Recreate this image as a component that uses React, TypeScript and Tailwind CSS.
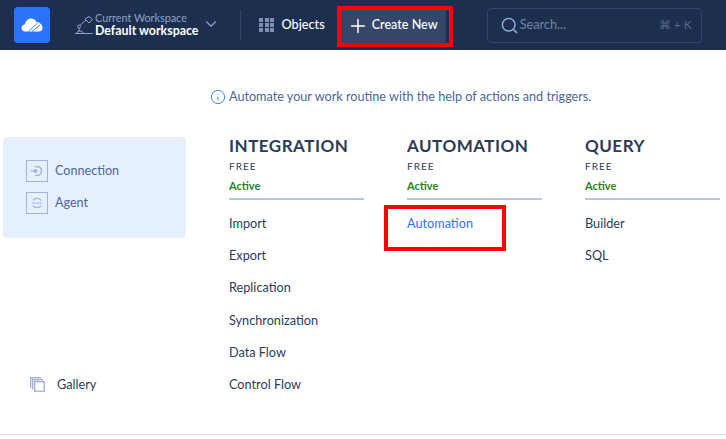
import { ChevronDown, Plus, Search, Info } from 'lucide-react';

const columns = [
  { title: 'INTEGRATION', items: ['Import', 'Export', 'Replication', 'Synchronization', 'Data Flow', 'Control Flow'] },
  { title: 'AUTOMATION', items: ['Automation'] },
  { title: 'QUERY', items: ['Builder', 'SQL'] },
];

const Logo = () => (
  <div className="w-9 h-9 rounded-[4px] bg-[#2a74fb] flex items-center justify-center">
    <svg width="22" height="14" viewBox="0 0 22 14" fill="white">
      <path d="M4 13.5C2 13.5 0.5 12 0.5 10C0.5 8 2 6.5 4 6.3C4.5 3 7 0.5 10 0.5C12.5 0.5 14.5 1.8 15.5 4C18.5 4 21.5 6.5 21.5 10C21.5 12 20 13.5 18 13.5Z" />
      <path d="M7.5 13.5L16.5 5" stroke="#2a74fb" strokeWidth="0.9" />
      <path d="M11 13.5L19 7" stroke="#2a74fb" strokeWidth="0.9" />
    </svg>
  </div>
);

const Lamp = () => (
  <svg width="19" height="23" viewBox="0 0 19 23" fill="none" stroke="#8fa3c7" strokeWidth="1">
    <path d="M0 19.5H18" />
    <path d="M2 19C2 17.5 3.5 17 5 17C6.5 17 8 17.5 8 19" />
    <circle cx="4" cy="12.5" r="1.5" />
    <path d="M5 11.5L11 6M4 14V17" />
    <path d="M10 5L14 2.5L17.5 5.5L14 9Z" />
  </svg>
);

const Grid = () => (
  <div className="grid grid-cols-3 gap-[1px] w-[15px]">
    {[...Array(9)].map((_, i) => (
      <div key={i} className="w-[4px] h-[4px] bg-[#7e91b5]" />
    ))}
  </div>
);

const Header = () => (
  <header className="h-[50px] bg-[#1c2f4f] flex items-center pl-[14px] relative">
    <Logo />
    <div className="ml-[25px] flex items-center">
      <Lamp />
      <div className="ml-[1px] leading-none">
        <div className="text-[10.8px] leading-[12px] text-[#8fa3c7]">Current Workspace</div>
        <div className="text-[12.4px] leading-[14px] font-bold text-white">Default workspace</div>
      </div>
      <ChevronDown className="ml-[4px] mb-[2px] text-[#8fa3c7]" size={18} strokeWidth={1.5} />
    </div>
    <div className="ml-[20px] w-px h-[30px] bg-[#33476b]" />
    <div className="ml-[18px] flex items-center gap-[7px]">
      <Grid />
      <span className="text-[12.7px] font-medium text-white">Objects</span>
    </div>
    <button className="ml-[14px] mt-[1px] w-[107px] h-[34px] bg-[#36466a] rounded-[3px] flex items-center pl-[8px] gap-[3px] text-[12.6px] font-medium text-white">
      <Plus size={22} strokeWidth={1.6} />
      Create New
    </button>
    <div className="ml-[41px] w-[215px] h-[35px] border border-[#33476b] rounded-[4px] flex items-center pl-[12px] pr-[9px]">
      <Search size={19} strokeWidth={1.8} className="text-[#8fb0e0]" />
      <span className="ml-[1px] text-[12.7px] text-[#6f85a9]">Search...</span>
      <span className="ml-auto text-[12px] text-[#56698c]">⌘ + K</span>
    </div>
  </header>
);

const Connection = () => (
  <svg width="22" height="22" viewBox="0 0 22 22" fill="none" stroke="#a3b4dc">
    <rect x="0.5" y="0.5" width="21" height="21" />
    <path d="M9 7A4.5 4.5 0 1 1 9 15" strokeWidth="1.4" />
    <path d="M4.5 11H9" strokeWidth="1.3" />
    <circle cx="9.5" cy="11" r="2" fill="#a3b4dc" stroke="none" />
  </svg>
);

const Agent = () => (
  <svg width="22" height="22" viewBox="0 0 22 22" fill="none" stroke="#a3b4dc">
    <rect x="0.5" y="0.5" width="21" height="21" />
    <path d="M7 8.5A4.2 3 0 0 1 15 8.5M7 13.5A4.2 3 0 0 0 15 13.5" strokeWidth="1.4" />
    <path d="M5.5 11H16.5" strokeWidth="1" />
  </svg>
);

const Gallery = () => (
  <svg width="15" height="15" viewBox="0 0 15 15" fill="none" stroke="#a3b4dc" strokeWidth="1.4">
    <path d="M0.7 11V0.7H11" />
    <path d="M2.7 12.5V2.7H13" />
    <rect x="4.7" y="4.7" width="9.5" height="9.5" />
  </svg>
);

const Sidebar = () => (
  <aside className="w-[186px] pl-[3px] flex flex-col shrink-0">
    <div className="mt-[87px] h-[101px] bg-[#e6f0fd] rounded-[4px] pl-[23px] pt-[23px] flex flex-col gap-[10px]">
      <div className="flex items-center gap-[7px] text-[12.6px] text-[#4a6799]">
        <Connection />
        Connection
      </div>
      <div className="flex items-center gap-[7px] text-[12.6px] text-[#4a6799]">
        <Agent />
        Agent
      </div>
    </div>
    <div className="mt-[137px] pl-[27px] flex items-center gap-[12px] text-[12.7px] text-[#2d3c58]">
      <Gallery />
      Gallery
    </div>
  </aside>
);

export default function App() {
  return (
    <div className="relative w-[726px] h-[439px] bg-white overflow-hidden font-['Lato',sans-serif]">
      <Header />
      <main className="flex h-[385px] border-b border-[#d0dcf5]">
        <Sidebar />
        <div className="pl-[24px] flex-1">
          <div className="pt-[39px] flex items-center gap-[3px] text-[12.65px] leading-[16px] text-[#4a6799]">
            <Info size={16} className="text-[#3f86f5]" strokeWidth={1.5} />
            Automate your work routine with the help of actions and triggers.
          </div>
          <div className="pl-[19px] mt-[31px] flex gap-[43px]">
            {columns.map((col) => (
              <div key={col.title} className="w-[135px]">
                <h2 className="text-[17px] leading-[20px] font-bold tracking-[0.5px] text-[#2c3c58] whitespace-nowrap">
                  {col.title}
                </h2>
                <div className="mt-[4px] text-[10px] leading-[12px] tracking-[1px] text-[#2d3c58]">FREE</div>
                <div className="mt-[7px] pb-[6px] text-[11px] leading-[13px] font-bold text-[#2c8122] border-b-2 border-[#b5c5e4]">
                  Active
                </div>
                <ul className="mt-[7px]">
                  {col.items.map((item) => (
                    <li
                      key={item}
                      className={`h-[32.3px] flex items-center text-[12.7px] ${item === 'Automation' ? 'text-[#2a74fb]' : 'text-[#2d3c58]'}`}
                    >
                      {item}
                    </li>
                  ))}
                </ul>
              </div>
            ))}
          </div>
        </div>
      </main>
      {/* annotation boxes over the screenshot */}
      <div className="absolute left-[337px] top-[6px] w-[116px] h-[41px] border-[4px] border-[#fe0000]" />
      <div className="absolute left-[384px] top-[205px] w-[122px] h-[46px] border-[4px] border-[#fe0000]" />
    </div>
  );
}
